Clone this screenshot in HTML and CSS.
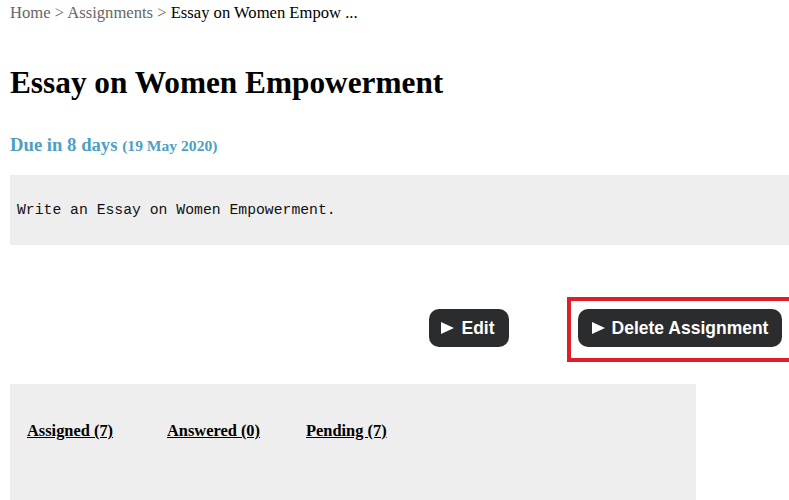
FILE: index.html
```html
<!DOCTYPE html>
<html>
<head>
<meta charset="utf-8">
<link rel="stylesheet" href="styles.css">
</head>
<body>
<div class="page">
  <nav class="crumbs"><a class="crumb">Home</a> &gt; <a class="crumb">Assignments</a> &gt; <span class="current">Essay on Women Empow ...</span></nav>
  <h1 class="title">Essay on Women Empowerment</h1>
  <h3 class="due">Due in 8 days <span class="date">(19 May 2020)</span></h3>
  <div class="desc"><pre class="desc-text">Write an Essay on Women Empowerment.</pre></div>
  <div class="actions">
    <button class="btn btn-edit"><svg class="tri" viewBox="0 0 13 12" width="13" height="12"><polygon points="0,0 13,6 0,12" fill="#fff"/></svg>Edit</button>
    <div class="highlight">
      <button class="btn btn-delete"><svg class="tri" viewBox="0 0 13 12" width="13" height="12"><polygon points="0,0 13,6 0,12" fill="#fff"/></svg>Delete Assignment</button>
    </div>
  </div>
  <div class="stats">
    <a class="stat">Assigned (7)</a>
    <a class="stat">Answered (0)</a>
    <a class="stat">Pending (7)</a>
  </div>
</div>
</body>
</html>
```
FILE: styles.css
```css
html, body {
  margin: 0;
  padding: 0;
  overflow: hidden;
  background: #ffffff;
}
body {
  font-family: "Liberation Serif", "Times New Roman", serif;
  color: #000;
}
.page {
  padding-left: 10px;
  width: 800px;
}
.crumbs {
  font-size: 16.6px;
  line-height: 18px;
  padding-top: 4px;
  color: #666;
}
.crumb {
  color: #666;
  text-decoration: none;
}
.current {
  color: #000;
}
.title {
  font-size: 31.3px;
  font-weight: bold;
  margin: 0;
  padding-top: 43px;
  line-height: 36px;
}
.due {
  margin: 0;
  padding-top: 33px;
  font-size: 18.7px;
  line-height: 22px;
  color: #4f9fc4;
  font-weight: bold;
}
.date {
  font-size: 15.6px;
}
.desc {
  margin-top: 18px;
  width: 779px;
  height: 70px;
  background: #eeeeee;
  display: flex;
  align-items: center;
}
.desc-text {
  margin: 0;
  padding-left: 7px;
  font-family: "Liberation Mono", "DejaVu Sans Mono", monospace;
  font-size: 14.75px;
  line-height: 18px;
  color: #111;
}
.actions {
  margin-top: 52px;
  display: flex;
  align-items: flex-start;
  padding-left: 419px;
}
.btn {
  font-family: "Liberation Sans", Arial, sans-serif;
  font-weight: bold;
  font-size: 17.5px;
  color: #ffffff;
  background: #2b2c2e;
  border: none;
  border-radius: 10px;
  height: 38px;
  padding: 0;
  white-space: nowrap;
  display: flex;
  align-items: center;
  justify-content: center;
  gap: 7px;
  cursor: pointer;
}
.tri {
  display: block;
  flex: none;
}
.btn-edit {
  width: 80px;
  margin-top: 12px;
  padding-right: 2px;
}
.btn-delete {
  width: 204px;
}
.highlight {
  margin-left: 58px;
  border: 4px solid #dd1f29;
  padding: 8px 7px 11px 7px;
  display: flex;
}
.stats {
  margin-top: 22px;
  width: 686px;
  height: 140px;
  background: #eeeeee;
  display: grid;
  grid-template-columns: 140px 139px 140px;
  align-content: start;
  padding-left: 17px;
  box-sizing: border-box;
  padding-top: 38px;
}
.stat {
  font-size: 16.4px;
  font-weight: bold;
  text-decoration: underline;
  color: #000;
  line-height: 18px;
}
```
